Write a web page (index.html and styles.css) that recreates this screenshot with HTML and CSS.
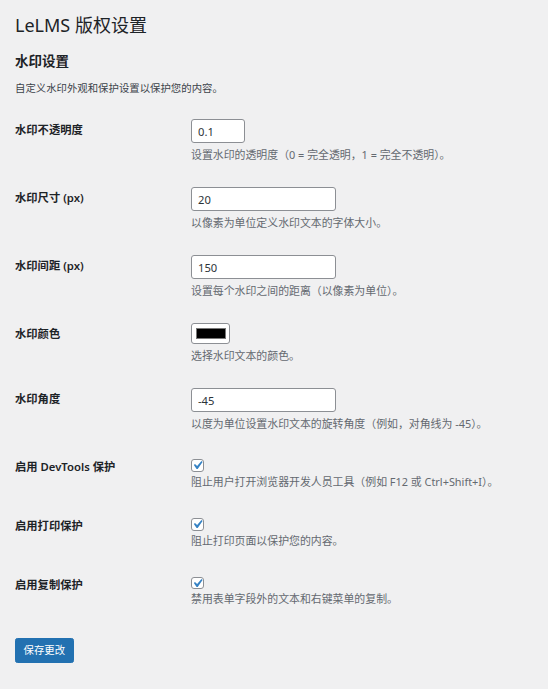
FILE: index.html
```html
<!DOCTYPE html>
<html lang="zh-CN">
<head>
  <meta charset="UTF-8" />
  <meta name="viewport" content="width=device-width, initial-scale=1.0" />
  <title>LeLMS 版权设置</title>
  <link rel="stylesheet" href="styles.css">
</head>
<body>
  <div class="wrap">
    <h1 class="page-title">LeLMS 版权设置</h1>

    <form class="settings-form" method="POST">
      <h2 class="section-title">水印设置</h2>
      <p class="section-intro">自定义水印外观和保护设置以保护您的内容。</p>

      <table class="form-table">
        <tr class="row-field">
          <th><label for="wm_opacity">水印不透明度</label></th>
          <td>
            <input type="text" id="wm_opacity" class="text-input small-text" value="0.1" />
            <p class="description">设置水印的透明度（0 = 完全透明，1 = 完全不透明）。</p>
          </td>
        </tr>
        <tr class="row-field">
          <th><label for="wm_size">水印尺寸 (px)</label></th>
          <td>
            <input type="text" id="wm_size" class="text-input regular-text" value="20" />
            <p class="description">以像素为单位定义水印文本的字体大小。</p>
          </td>
        </tr>
        <tr class="row-field">
          <th><label for="wm_spacing">水印间距 (px)</label></th>
          <td>
            <input type="text" id="wm_spacing" class="text-input regular-text" value="150" />
            <p class="description">设置每个水印之间的距离（以像素为单位）。</p>
          </td>
        </tr>
        <tr class="row-field">
          <th><label for="wm_color">水印颜色</label></th>
          <td>
            <input type="color" id="wm_color" class="color-input" value="#000000" />
            <p class="description">选择水印文本的颜色。</p>
          </td>
        </tr>
        <tr class="row-field">
          <th><label for="wm_angle">水印角度</label></th>
          <td>
            <input type="text" id="wm_angle" class="text-input regular-text" value="-45" />
            <p class="description">以度为单位设置水印文本的旋转角度（例如，对角线为 -45）。</p>
          </td>
        </tr>
        <tr class="row-check">
          <th><label>启用 DevTools 保护</label></th>
          <td>
            <span class="check"><svg viewBox="0 0 20 20"><path d="M14.83 4.89l1.34.94-5.81 8.38H9.02L5.78 9.67l1.34-1.25 2.57 2.4z" fill="#3582c4"/></svg></span>
            <p class="description">阻止用户打开浏览器开发人员工具（例如 F12 或 Ctrl+Shift+I）。</p>
          </td>
        </tr>
        <tr class="row-check">
          <th><label>启用打印保护</label></th>
          <td>
            <span class="check"><svg viewBox="0 0 20 20"><path d="M14.83 4.89l1.34.94-5.81 8.38H9.02L5.78 9.67l1.34-1.25 2.57 2.4z" fill="#3582c4"/></svg></span>
            <p class="description">阻止打印页面以保护您的内容。</p>
          </td>
        </tr>
        <tr class="row-check">
          <th><label>启用复制保护</label></th>
          <td>
            <span class="check"><svg viewBox="0 0 20 20"><path d="M14.83 4.89l1.34.94-5.81 8.38H9.02L5.78 9.67l1.34-1.25 2.57 2.4z" fill="#3582c4"/></svg></span>
            <p class="description">禁用表单字段外的文本和右键菜单的复制。</p>
          </td>
        </tr>
      </table>

      <p class="submit">
        <button type="submit" class="button-primary">保存更改</button>
      </p>
    </form>
  </div>
</body>
</html>
```

FILE: styles.css
```css
* {
  box-sizing: border-box;
}

body {
  margin: 0;
  background-color: #f0f0f1;
  color: #3c434a;
  font-family: "Noto Sans", "Noto Sans CJK SC", sans-serif;
  font-size: 10.4px;
}

.wrap {
  padding: 13px 16px 0 15px;
}

.page-title {
  margin: 0;
  font-size: 18px;
  font-weight: 400;
  line-height: 24px;
  color: #1d2327;
}

.section-title {
  margin: 15px 0 0;
  font-size: 13.5px;
  font-weight: 600;
  line-height: 18px;
  color: #1d2327;
}

.section-intro {
  margin: 10px 0 0;
  line-height: 16px;
}

.form-table {
  width: 100%;
  margin-top: 11px;
  border-collapse: collapse;
}

.form-table th {
  width: 176px;
  padding: 16px 0;
  text-align: left;
  vertical-align: top;
  font-size: 11.3px;
  font-weight: 600;
  line-height: 14.5px;
  color: #1d2327;
}

.form-table td {
  padding: 12px 8px 12px 0;
  vertical-align: top;
}

.row-check td {
  padding-bottom: 14px;
}

.text-input {
  display: block;
  height: 24px;
  padding: 0 6px;
  border: 1px solid #8c8f94;
  border-radius: 3px;
  background: #fff;
  color: #2c3338;
  font-family: inherit;
  font-size: 11.2px;
}

.small-text {
  width: 54px;
}

.regular-text {
  width: 145px;
}

.color-input {
  display: block;
  width: 39px;
  height: 21px;
  margin: 0 0 2px;
  padding: 0;
  border: 1px solid #8c8f94;
  border-radius: 3px;
  background: #fff;
  -webkit-appearance: none;
  appearance: none;
}

.color-input::-webkit-color-swatch-wrapper {
  padding: 4px 3px 4px 4px;
}

.color-input::-webkit-color-swatch {
  border: 1px solid #777;
  border-radius: 0;
}

.check {
  display: block;
  position: relative;
  width: 12.8px;
  height: 12.8px;
  margin-top: 3px;
  border: 1px solid #8c8f94;
  border-radius: 3px;
  background: #fff;
}

.check svg {
  position: absolute;
  top: -3px;
  left: -3.4px;
  width: 16.8px;
  height: 16.8px;
}

.description {
  margin: 4px 0 0;
  font-size: 10.9px;
  line-height: 16px;
  color: #646970;
}

.row-check .description {
  margin-top: 2px;
  line-height: 15px;
}

.submit {
  margin: 18px 0 0;
}

.button-primary {
  height: 25px;
  padding: 0 7.5px;
  border: 1px solid #2271b1;
  border-radius: 2.4px;
  background: #2271b1;
  color: #fff;
  font-family: inherit;
  font-size: 10.4px;
  line-height: 23px;
  cursor: pointer;
}
```
